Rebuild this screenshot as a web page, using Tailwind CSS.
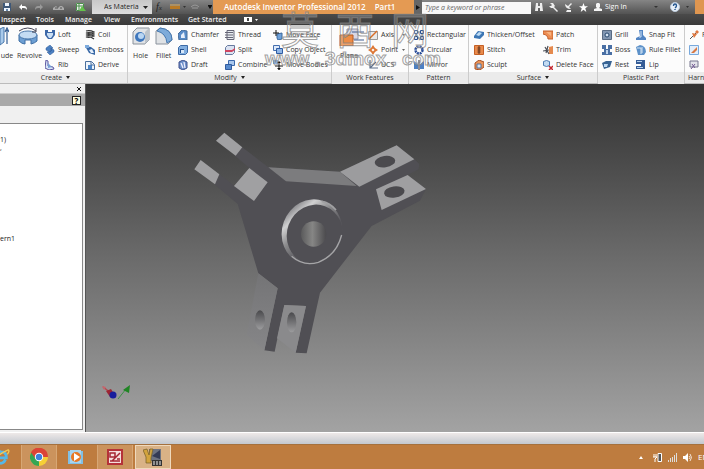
<!DOCTYPE html>
<html lang="en">

<head>
    <meta charset="UTF-8">
    <meta name="viewport" content="width=device-width, initial-scale=1.0">
    <title>Autodesk Inventor Professional 2012 - Part1</title>
    <script src="https://cdn.jsdelivr.net/npm/@tailwindcss/browser@4"></script>
</head>

<body class="relative h-screen flex flex-col overflow-hidden bg-[#333] font-['Open_Sans',sans-serif] text-[7px] leading-[10px] text-[#333] whitespace-nowrap">

    <!-- title bar -->
    <header class="flex h-[14px] shrink-0 items-stretch bg-linear-to-b from-[#858585] to-[#535353] text-white">
        <div class="flex w-[92px] shrink-0 items-center gap-2 pl-[3px]">
            <button aria-label="Save"><svg class="size-2" viewBox="0 0 8 8"><path d="M0 0h8v8H0z" fill="#3f5877"/><path d="M2 0h4v3H2zM1 5h6v3H1z" fill="#eef4fb"/><path d="M3 6h2v2H3z" fill="#6687aa"/></svg></button>
            <button aria-label="Undo"><svg class="size-2" viewBox="0 0 8 8"><path d="M0 4l3-3v2h2q3 0 3 4q-1-2-3-2H3v2z" fill="#fff"/></svg></button>
            <button aria-label="Redo"><svg class="size-2" viewBox="0 0 8 8"><path d="M8 4L5 1v2H3Q0 3 0 7q1-2 3-2h2v2z" fill="#999"/></svg></button>
            <button aria-label="Home" class="ml-[2px]"><svg class="h-2 w-3" viewBox="0 0 12 8"><path d="M0 7h11V5L9 3H7L5 5 3 3 0 5z" fill="#aaa"/><path d="M2 5h3M7 5h2" stroke="#555"/></svg></button>
            <button aria-label="Update" class="ml-[2px]"><svg class="h-[10px] w-3" viewBox="0 0 12 10"><path d="M1 1h8v8H1z" fill="#eee"/><path d="M1.500 1.500h7v7h-7zM1 4h8M4 1v8" fill="none" stroke="#4b8f4b"/><path d="M4 9l3-5 4 5z" fill="#63c24b"/></svg></button>
        </div>
        <div class="relative w-[60px] shrink-0">
            <select aria-label="Appearance" class="h-full w-full appearance-none bg-linear-to-b from-[#c8c8c8] to-[#ddd] pl-3 text-[7px] text-[#222]">
                <option>As Materia</option>
            </select>
            <svg class="pointer-events-none absolute right-1 top-[6px] h-[3px] w-[5px]" viewBox="0 0 5 3"><path d="M0 0h5L2.500 3z" fill="#222"/></svg>
        </div>
        <div class="flex w-[61px] shrink-0 items-center gap-2 pl-1">
            <i class="font-['Liberation_Serif',serif] text-[10px] text-[#222]">f<span class="text-[7px]">x</span></i>
            <svg class="h-2 w-[30px]" viewBox="0 0 30 8"><path d="M0 3h10v3H0z" fill="#b97a25"/><path d="M0 2h10" stroke="#e0b060"/><path d="M13 3h3l-1.500 2z" fill="#333"/><path d="M21 4q4-4 8 0M22 5h6" fill="none" stroke="#999"/></svg>
            <svg class="h-1 w-1" viewBox="0 0 4 4"><path d="M0 0h4v1L2 4 0 1z" fill="#111"/></svg>
        </div>
        <h1 class="flex w-[201px] shrink-0 items-center gap-[9px] bg-[#e49a53] pl-[11px] text-[8px] font-semibold"><span>Autodesk Inventor Professional 2012</span><span>Part1</span></h1>
        <div class="flex w-2 shrink-0 items-center justify-center bg-[#666]"><svg class="h-[5px] w-1" viewBox="0 0 4 5"><path d="M0 0l4 2.500L0 5z" fill="#111"/></svg></div>
        <input type="text" aria-label="Search" placeholder="Type a keyword or phrase" class="mt-[2px] w-[109px] shrink-0 bg-[#f8f8f8] pl-[3px] text-[7px] italic placeholder:text-[#666]">
        <div class="flex flex-1 items-center gap-[6px] pl-1">
            <svg class="size-2" viewBox="0 0 8 8"><path d="M1 0h2v3h2V0h2l1 8H5V5H3v3H0z" fill="#eee"/></svg>
            <svg class="size-[9px]" viewBox="0 0 9 9"><path d="M1 0h3l2 3-1 1 4 4-1 1-4-4H2L0 3l2 0 1-1z" fill="#eee"/></svg>
            <svg class="size-[9px]" viewBox="0 0 9 9"><path d="M1 1q0 5 6 5L5 4l3-3-1-1-3 3zM3 7h4v2H2z" fill="#eee"/></svg>
            <svg class="size-[9px]" viewBox="0 0 9 9"><path d="M4.500 0l1.200 3.200H9L6.300 5.300 7.300 9 4.500 6.800 1.700 9l1-3.700L0 3.200h3.300z" fill="#fff"/></svg>
            <a href="#" class="flex items-center gap-[3px]"><svg class="size-2" viewBox="0 0 8 8"><path d="M3 0h2l1 1v3L5 5l3 1v2H0V6l3-1-1-1V1z" fill="#f4f4f4"/></svg>Sign In</a>
            <svg class="ml-auto h-[2px] w-1" viewBox="0 0 4 2"><path d="M0 0h4L2 2z" fill="#333"/></svg>
            <button aria-label="Help" class="ml-[6px]"><svg class="size-[10px]" viewBox="0 0 10 10"><circle cx="5" cy="5" r="4.500" fill="#e8f0f8" stroke="#bccbdc"/><path d="M3.500 4q0-2 1.500-2t1.500 1.500T5 6M5 7v1" fill="none" stroke="#24568f" stroke-width="1.400"/></svg></button>
            <svg class="h-[2px] w-[3px]" viewBox="0 0 4 2"><path d="M0 0h4L2 2z" fill="#222"/></svg>
            <div class="w-[9px] self-stretch bg-[#df9650]"></div>
        </div>
    </header>

    <!-- ribbon tabs -->
    <nav class="flex h-[11px] shrink-0 items-center bg-linear-to-b from-[#4a4a4a] to-[#3a3a3a] pl-px leading-[11px] font-semibold text-[#eee]">
        <button class="w-[35px] text-left">Inspect</button>
        <button class="w-[29px] text-left">Tools</button>
        <button class="w-[39px] text-left">Manage</button>
        <button class="w-[27px] text-left">View</button>
        <button class="w-[57px] text-left">Environments</button>
        <button class="w-14 text-left">Get Started</button>
        <svg class="h-[5px] w-[15px]" viewBox="0 0 15 5"><path d="M0 0h8v5H0z" fill="#fff"/><path d="M3 1h2v3H3z" fill="#444"/><path d="M11 2h3l-1.500 2z" fill="#fff"/></svg>
    </nav>

    <!-- ribbon -->
    <div class="flex h-[59px] shrink-0 border-b border-[#bbb] bg-[#fcfcfc]">
        <section class="flex w-32 shrink-0 flex-col border-r border-[#ccc]">
            <div class="flex flex-1 pt-[2px]">
                <button class="flex w-[14px] flex-col gap-[5px]">
                    <svg class="h-[19px] w-[9px]" viewBox="0 0 9 19"><path d="M0 2l4-2v15l-4 3z" fill="#a9caeb" stroke="#4a78ab"/><path d="M7 17V3M5 5l2-4 2 4" fill="none" stroke="#345e93" stroke-width="1.200"/></svg>
                    <span>ude</span>
                </button>
                <button class="flex w-[31px] flex-col gap-[5px]">
                    <svg class="ml-1 h-[19px] w-5" viewBox="0 0 20 19"><path d="M1 8v6q3 3 6 3v-4h6v4q4-1 6-3V8z" fill="#6d9fd3" stroke="#3f6fa5"/><ellipse cx="10" cy="8" rx="9" ry="4" fill="#c4dcf3" stroke="#4a78ab"/><path d="M1 4q9-6 17 0M18 1v4h-4" fill="none" stroke="#445"/></svg>
                    <span>Revolve</span>
                </button>
                <div class="w-10">
                    <button class="flex h-[15px] items-center gap-[3px]"><svg class="size-[10px]" viewBox="0 0 10 10"><path d="M0 0h3v2h4V0h3v5L7 9H3L0 5z" fill="#3d68a8"/><path d="M2 3h6v2L6 8H4L2 5z" fill="#c9def4"/></svg>Loft</button>
                    <button class="flex h-[15px] items-center gap-[3px]"><svg class="size-[10px]" viewBox="0 0 10 10"><path d="M5 0L1 3v2l4 2 2-2-2-1 3-1zM5 10l4-3V5L6 3v3L2 7z" fill="#4b80c2" stroke="#315b95" stroke-width=".5"/></svg>Sweep</button>
                    <button class="flex h-[15px] items-center gap-[3px]"><svg class="size-[10px]" viewBox="0 0 10 10"><path d="M1 0l2 1v5l5 1 1 2-5 1-4-2z" fill="#d7e6f7" stroke="#5c55a0"/><path d="M3 3l4 4-4 1z" fill="#789fd5"/></svg>Rib</button>
                </div>
                <div class="flex-1">
                    <button class="flex h-[15px] items-center gap-[3px]"><svg class="size-[10px]" viewBox="0 0 10 10"><path d="M1 1q4-1 8 1-4 2-8 1 4-1 8 1-4 2-8 1 4-1 8 1-4 2-8 1 4-1 8 2" fill="none" stroke="#333" stroke-width="1.200"/></svg>Coil</button>
                    <button class="flex h-[15px] items-center gap-[3px]"><svg class="size-[10px]" viewBox="0 0 10 10"><path d="M0 1l6 1 4 3v5L4 8z" fill="#3868a6"/><path d="M4 5l3-1 2 4-3 0z" fill="#e3eefb"/><path d="M0 0h4v3H0z" fill="#7caadd"/></svg>Emboss</button>
                    <button class="flex h-[15px] items-center gap-[3px]"><svg class="size-[10px]" viewBox="0 0 10 10"><path d="M.5 1.500h6l3 3v5h-9z" fill="#eef4fb" stroke="#4a6f9d"/><path d="M3 5h4v4H3z" fill="#4b85c8"/><path d="M6 2v3h3" fill="none" stroke="#4a6f9d"/></svg>Derive</button>
                </div>
            </div>
            <button class="flex h-3 items-center justify-center gap-1 bg-[#ebebeb] pr-4">Create<svg class="h-[3px] w-1" viewBox="0 0 4 3"><path d="M0 0h4L2 3z" fill="#222"/></svg></button>
        </section>

        <section class="flex w-[204px] shrink-0 flex-col border-r border-[#ccc]">
            <div class="flex flex-1 pt-[2px] pl-1">
                <button class="flex w-[23px] flex-col items-start gap-[5px]">
                    <svg class="h-[19px] w-[18px]" viewBox="0 0 18 19"><path d="M1 5l4-4h12v12l-4 4H1z" fill="#e0e3e6" stroke="#8a929c"/><path d="M13 17V5l4-4v12z" fill="#bcc3ca"/><circle cx="8" cy="10" r="5" fill="#3e77bd"/><circle cx="9" cy="9" r="3" fill="#b9d6f3"/></svg>
                    <span class="pl-px">Hole</span>
                </button>
                <button class="flex w-[23px] flex-col items-start gap-[5px]">
                    <svg class="h-[19px] w-[18px]" viewBox="0 0 18 19"><path d="M1 4l4-3q12 1 12 12l-4 4H1z" fill="#dfe2e5" stroke="#8a929c"/><path d="M5 1q12 1 12 12l-5 3Q11 6 2 4z" fill="#7eabd9" stroke="#4578b0"/></svg>
                    <span class="pl-px">Fillet</span>
                </button>
                <div class="w-[47px]">
                    <button class="flex h-[15px] items-center gap-[3px]"><svg class="size-[10px]" viewBox="0 0 10 10"><path d="M0 4l4-4 5 1v9H1z" fill="#578bc8" stroke="#496e9a"/><path d="M3 5l3-3 1 6H3z" fill="#e5eefa"/></svg>Chamfer</button>
                    <button class="flex h-[15px] items-center gap-[3px]"><svg class="size-[10px]" viewBox="0 0 10 10"><path d="M.5 2.500l2-2h7v7l-2 2h-7z" fill="#81aee0" stroke="#3c6aa6"/><path d="M2 4h4v4H2z" fill="#204d8c"/><path d="M3 5h3v3H3z" fill="#d8e8f9"/></svg>Shell</button>
                    <button class="flex h-[15px] items-center gap-[3px]"><svg class="size-[10px]" viewBox="0 0 10 10"><path d="M1 2l4-2 4 2v6l-4 2-4-2z" fill="#6b8ec8" stroke="#40508c"/><path d="M3 3l2 5M6 2l1 6" stroke="#eef" stroke-width="1.300"/></svg>Draft</button>
                </div>
                <div class="w-12">
                    <button class="flex h-[15px] items-center gap-[3px]"><svg class="size-[10px]" viewBox="0 0 10 10"><path d="M2 .5h7v9H2zM0 2.500h8M0 5h8M0 7.500h8" fill="#e7ebef" stroke="#667"/></svg>Thread</button>
                    <button class="flex h-[15px] items-center gap-[3px]"><svg class="size-[10px]" viewBox="0 0 10 10"><path d="M.5 2.500l2-2h7v7l-2 2h-7z" fill="#dbe2f1" stroke="#66799e"/><path d="M0 5h7l3-2v2L7 7H0z" fill="#ce4661"/></svg>Split</button>
                    <button class="flex h-[15px] items-center gap-[3px]"><svg class="size-[10px]" viewBox="0 0 10 10"><path d="M3.500.5h6v5h-6z" fill="#a9c7ec" stroke="#3b68ab"/><path d="M.5 4.500h6v5h-6z" fill="#588bcd" stroke="#315b9e"/></svg>Combine</button>
                </div>
                <div class="flex-1">
                    <button class="flex h-[15px] items-center gap-[3px]"><svg class="size-[10px]" viewBox="0 0 10 10"><path d="M4 4l5-1v6l-4 1-1-2z" fill="#6fa1d9" stroke="#3b689e"/><path d="M0 3h6M3 0v6" stroke="#111"/></svg>Move Face</button>
                    <button class="flex h-[15px] items-center gap-[3px]"><svg class="size-[10px]" viewBox="0 0 10 10"><path d="M.5.5h6v5h-6z" fill="#dfeafa" stroke="#466fae"/><path d="M3.500 3.500h6v5h-6z" fill="#8fb6e7" stroke="#2f5ca3"/></svg>Copy Object</button>
                    <button class="flex h-[15px] items-center gap-[3px]"><svg class="size-[10px]" viewBox="0 0 10 10"><path d="M0 0h5v4H0z" fill="#79a6dc"/><path d="M2 6h8M6 2v8" stroke="#111"/><path d="M6 1l2 2H4zM6 10L4 8h4z" fill="#111"/></svg>Move Bodies</button>
                </div>
            </div>
            <button class="flex h-3 items-center justify-center gap-1 bg-[#ebebeb]">Modify<svg class="h-[3px] w-1" viewBox="0 0 4 3"><path d="M0 0h4L2 3z" fill="#222"/></svg></button>
        </section>

        <section class="flex w-[77px] shrink-0 flex-col border-r border-[#ccc]">
            <div class="flex flex-1 pt-[2px] pl-[7px]">
                <button class="flex w-[29px] flex-col items-start gap-[5px]">
                    <svg class="h-[19px] w-[26px]" viewBox="0 0 26 19"><path d="M8 2h11v10H8z" fill="#d8d7e5" stroke="#9294a5"/><path d="M13 5h12M15 13h10" stroke="#3f5c92"/><path d="M1 8h13v11H1z" fill="#ed8c46" stroke="#b65b22"/></svg>
                    <span class="pl-px">Plane</span>
                </button>
                <div class="flex-1">
                    <button class="flex h-[15px] items-center gap-[3px]"><svg class="size-[10px]" viewBox="0 0 10 10"><path d="M.5 1.500h9v8h-9z" fill="#e9e9e9" stroke="#999"/><path d="M1 9l8-8" stroke="#d86c27" stroke-width="1.500"/></svg>Axis<svg class="ml-[5px] h-[2px] w-[3px]" viewBox="0 0 4 2"><path d="M0 0h4L2 2z" fill="#333"/></svg></button>
                    <button class="flex h-[15px] items-center gap-[3px]"><svg class="size-[10px]" viewBox="0 0 10 10"><path d="M5 0l2 3 3 2-3 2-2 3-2-3-3-2 3-2z" fill="#dd7735"/><path d="M5 3.500L6.500 5 5 6.500 3.500 5z" fill="#fff"/></svg>Point<svg class="ml-px h-[2px] w-[3px]" viewBox="0 0 4 2"><path d="M0 0h4L2 2z" fill="#333"/></svg></button>
                    <button class="flex h-[15px] items-center gap-[3px]"><svg class="size-[10px]" viewBox="0 0 10 10"><path d="M2 0v8h8M2 8l6-6" fill="none" stroke="#5e6f89" stroke-width="1.200"/></svg>UCS</button>
                </div>
            </div>
            <div class="h-3 bg-[#ebebeb] text-center leading-3">Work Features</div>
        </section>

        <section class="flex w-[60px] shrink-0 flex-col border-r border-[#ccc]">
            <div class="flex-1 pt-[2px] pl-[5px]">
                <button class="flex h-[15px] items-center gap-[3px]"><svg class="size-[10px]" viewBox="0 0 10 10"><path d="M2 2h6v6H2z" fill="none" stroke="#777"/><path d="M.5.5h3v3h-3zM6.500.5h3v3h-3zM.5 6.500h3v3h-3zM6.500 6.500h3v3h-3z" fill="#d7e5f6" stroke="#294f91"/></svg>Rectangular</button>
                <button class="flex h-[15px] items-center gap-[3px]"><svg class="size-[10px]" viewBox="0 0 10 10"><circle cx="5" cy="5" r="3.500" fill="none" stroke="#2a4d99" stroke-width="2.500" stroke-dasharray="2 .75"/></svg>Circular</button>
                <button class="flex h-[15px] items-center gap-[3px]"><svg class="size-[10px]" viewBox="0 0 10 10"><path d="M0 1l4 3v5H0zM10 1L6 4v5h4z" fill="#4d80c3"/><path d="M5 0v10" stroke="#223"/></svg>Mirror</button>
            </div>
            <div class="h-3 bg-[#ebebeb] text-center leading-3">Pattern</div>
        </section>

        <section class="flex w-[129px] shrink-0 flex-col border-r border-[#ccc]">
            <div class="flex flex-1 pt-[2px] pl-[5px]">
                <div class="w-[69px]">
                    <button class="flex h-[15px] items-center gap-[3px]"><svg class="size-[10px]" viewBox="0 0 10 10"><path d="M0 6l4-5 6 1v3L6 9 0 8z" fill="#3c76b4"/><path d="M2 5l3-3 3 1-3 3z" fill="#bddcf5"/></svg>Thicken/Offset</button>
                    <button class="flex h-[15px] items-center gap-[3px]"><svg class="size-[10px]" viewBox="0 0 10 10"><path d="M.5.5h9v9h-9z" fill="#e98a4b" stroke="#c46026"/><path d="M5 1v8M3.500 3h3M3.500 5h3M3.500 7h3" stroke="#61331c"/></svg>Stitch</button>
                    <button class="flex h-[15px] items-center gap-[3px]"><svg class="size-[10px]" viewBox="0 0 10 10"><path d="M1 3l4-3 5 2v5l-4 3-5-1z" fill="#eb9457" stroke="#a75026"/><path d="M3 4h4v4H3z" fill="#dce6f4" stroke="#55719a"/></svg>Sculpt</button>
                </div>
                <div class="flex-1">
                    <button class="flex h-[15px] items-center gap-[3px]"><svg class="size-[10px]" viewBox="0 0 10 10"><path d="M0 1h10v8H5Q5 5 0 4z" fill="#ed8d53" stroke="#c3602c"/><path d="M3 2h5v4z" fill="#f8b27e"/></svg>Patch</button>
                    <button class="flex h-[15px] items-center gap-[3px]"><svg class="size-[10px]" viewBox="0 0 10 10"><path d="M6 2l4-1v8H6z" fill="#e58a4e"/><path d="M0 6l6-1M2 2l4 7M5 1L3 8" stroke="#4d5058" stroke-width="1.200"/></svg>Trim</button>
                    <button class="flex h-[15px] items-center gap-[3px]"><svg class="size-[10px]" viewBox="0 0 10 10"><path d="M.5 1.500l3-1 3 1v4l-3 1-3-1z" fill="#c4dbf2" stroke="#4b7bb3"/><path d="M6 6l4 4M10 6l-4 4" stroke="#c5282e" stroke-width="1.500"/></svg>Delete Face</button>
                </div>
            </div>
            <button class="flex h-3 items-center justify-center gap-1 bg-[#ebebeb]">Surface<svg class="h-[3px] w-1" viewBox="0 0 4 3"><path d="M0 0h4L2 3z" fill="#222"/></svg></button>
        </section>

        <section class="flex w-[87px] shrink-0 flex-col border-r border-[#ccc]">
            <div class="flex flex-1 pt-[2px] pl-1">
                <div class="w-[34px]">
                    <button class="flex h-[15px] items-center gap-[3px]"><svg class="size-[10px]" viewBox="0 0 10 10"><path d="M.5.5h9v9h-9z" fill="#8397b2" stroke="#596b83"/><circle cx="5" cy="5" r="2" fill="#d6e4f4" stroke="#27476e"/></svg>Grill</button>
                    <button class="flex h-[15px] items-center gap-[3px]"><svg class="size-[10px]" viewBox="0 0 10 10"><path d="M0 0h4v4h2V0h4v4H8v3h2v3H0V7h2V4H0z" fill="#496fa4"/><path d="M4 5h2v4H4z" fill="#c1d7ef"/></svg>Boss</button>
                    <button class="flex h-[15px] items-center gap-[3px]"><svg class="size-[10px]" viewBox="0 0 10 10"><path d="M0 3l4-2h6L8 7 2 9z" fill="#376394"/><path d="M2 4h4L5 7H2z" fill="#bfd9f2"/></svg>Rest</button>
                </div>
                <div class="flex-1">
                    <button class="flex h-[15px] items-center gap-[3px]"><svg class="size-[10px]" viewBox="0 0 10 10"><path d="M3 0h4v5l3 3v2H0V8l4-2z" fill="#5385c3"/><path d="M5 1v6H3" fill="none" stroke="#d2e3f6"/></svg>Snap Fit</button>
                    <button class="flex h-[15px] items-center gap-[3px]"><svg class="size-[10px]" viewBox="0 0 10 10"><path d="M0 2l4-2q6 1 6 7l-2 3H2z" fill="#5c91c9"/><path d="M1 3h4v6M6 2v6" fill="none" stroke="#d6e6f5"/></svg>Rule Fillet</button>
                    <button class="flex h-[15px] items-center gap-[3px]"><svg class="size-[10px]" viewBox="0 0 10 10"><path d="M0 0h9v9H0V6h5V4H0z" fill="#355c96"/><path d="M1 1h5v1H1zM1 7h6v1H1z" fill="#b5d0ec"/></svg>Lip</button>
                </div>
            </div>
            <div class="h-3 bg-[#ebebeb] text-center leading-3">Plastic Part</div>
        </section>

        <section class="flex flex-1 flex-col overflow-hidden">
            <div class="flex-1 pt-[2px] pl-1">
                <button class="flex h-[15px] items-center gap-[3px]"><svg class="size-[10px] shrink-0" viewBox="0 0 10 10"><path d="M1 9l7-7" stroke="#555"/><path d="M3 3l5 1-3 4zM8 0l2 2-2 2-2-2z" fill="#df7941"/></svg>P</button>
                <button aria-label="Place pins" class="flex h-[15px] items-center"><svg class="size-[10px]" viewBox="0 0 10 10"><path d="M.5.5h9v9h-9z" fill="#e4effb" stroke="#78a9dc"/><path d="M2 8l6-6v3L5 8z" fill="#d87842"/></svg></button>
                <button aria-label="Properties" class="flex h-[15px] items-center"><svg class="size-[10px]" viewBox="0 0 10 10"><path d="M1 1h8v6H1z" fill="#e3e3ea" stroke="#77768f"/><path d="M2 9l4-5M3 4l3 4" stroke="#735a94"/></svg></button>
            </div>
            <div class="h-3 bg-[#ebebeb] pl-[3px] leading-3">Harness</div>
        </section>
    </div>

    <!-- workspace -->
    <main class="flex min-h-0 flex-1">
        <aside class="flex w-[86px] shrink-0 flex-col border-r border-[#555] bg-[#f0f0f0]">
            <div class="flex h-[10px] items-center justify-end border-b border-[#ccc] pr-1">
                <button aria-label="Close panel"><svg class="size-1" viewBox="0 0 4 4"><path d="M0 0l4 4M4 0L0 4" stroke="#111"/></svg></button>
            </div>
            <div class="flex h-3 items-center justify-end bg-[#a9a9a9] pr-1">
                <button aria-label="Browser help" class="size-[9px] border border-[#222] bg-[#ffffe1] text-[8px] leading-[7px] font-bold text-black">?</button>
            </div>
            <ul class="mt-[17px] mr-[2px] mb-[2px] flex-1 border-y border-r border-[#888] bg-white pt-[11px] text-[#222]">
                <li class="h-[10px]">1)</li>
                <li class="h-[89px] leading-[6px]">,</li>
                <li>ern1</li>
            </ul>
        </aside>

        <div class="min-w-0 flex-1 bg-linear-to-b from-[#323232] via-[#6b6b6b] to-[#a3a3a3]">
            <svg class="h-full w-full" viewBox="86 84 618 348" role="img" aria-label="Part1 model">
                <defs>
                    <linearGradient id="rim" x1="0" y1="0.200" x2="1" y2="0.800">
                        <stop offset="0" stop-color="#6c6c70" />
                        <stop offset=".2" stop-color="#d0d0d1" />
                        <stop offset=".4" stop-color="#8a8a8c" />
                        <stop offset=".65" stop-color="#58575c" />
                        <stop offset="1" stop-color="#504f54" />
                    </linearGradient>
                    <linearGradient id="bore">
                        <stop offset="0" stop-color="#5a5a5b" />
                        <stop offset=".45" stop-color="#868685" />
                        <stop offset="1" stop-color="#4b4a4d" />
                    </linearGradient>
                    <linearGradient id="leg" x1="0" y1="0" x2="0" y2="1">
                        <stop offset="0" stop-color="#747476" />
                        <stop offset="1" stop-color="#868688" />
                    </linearGradient>
                    <linearGradient id="pin" x1="0" y1="0" x2="0" y2="1">
                        <stop offset="0" stop-color="#49494c" />
                        <stop offset="1" stop-color="#9c9c9e" />
                    </linearGradient>
                </defs>
                <g transform="translate(180 120) scale(.3333)">
                    <path d="M187 82L265 142 480 155 650 76 703 118 718 132 716 148 683 165 738 207 720 242 575 318 420 518 380 700 347 698 378 558 313 555 284 695 253 691 293 505 235 460 173 252 103 193 118 163 163 197 208 144 165 107z" fill="#504f54" />
                    <path d="M133 38L187 82 167 107 108 62zM62 120L118 163 105 193 43 148zM208 144L263 187 222 243 162 198z" fill="#a0a0a2" />
                    <path d="M265 142L480 155 530 198 318 184z" fill="#7c7c7e" />
                    <path d="M480 155L650 76 703 118 538 200z" fill="#9c9c9e" />
                    <path d="M588 208L683 165 738 207 605 270z" fill="#9f9fa1" />
                    <ellipse cx="615" cy="125" rx="31" ry="17" fill="#4b4a4e" transform="rotate(-8 615 125)" />
                    <ellipse cx="643" cy="216" rx="31" ry="17" fill="#4b4a4e" transform="rotate(-8 643 216)" />
                    <path d="M235 460L293 505 253 691 200 645z" fill="url(#leg)" />
                    <path d="M313 555L378 558 347 698 291 655z" fill="#8a8a8c" />
                    <ellipse cx="240" cy="600" rx="15" ry="29" fill="url(#pin)" />
                    <ellipse cx="335" cy="607" rx="14" ry="30" fill="url(#pin)" />
                    <ellipse cx="396" cy="336" rx="90" ry="99" fill="url(#rim)" transform="rotate(20 396 336)" />
                    <ellipse cx="404" cy="343" rx="83" ry="90" fill="#504f54" transform="rotate(20 404 343)" />
                    <path d="M335 409Q370 440 415 427 470 405 485 345" fill="none" stroke="#a5a5a7" stroke-width="4" />
                    <path d="M425 244Q450 248 468 270" fill="none" stroke="#a0a0a2" stroke-width="5" />
                    <circle cx="401" cy="342" r="38" fill="url(#bore)" />
                </g>
                <!-- axis triad -->
                <path d="M103 387l8 6" stroke="#b04a50" stroke-width="1.500" />
                <path d="M118 399l8-10" stroke="#3f8f48" />
                <path d="M102 386l4 1-2 3z" fill="#c8646b" />
                <path d="M106 391l5-2 3 5-4 3z" fill="#9d2532" />
                <circle cx="113" cy="395" r="3.500" fill="#171e9c" />
                <path d="M130 385l-1 8-6-3z" fill="#208524" />
            </svg>
        </div>
    </main>

    <div class="h-3 shrink-0 border-t border-white bg-linear-to-b from-[#eee9e8] to-[#c3c8cf]"></div>

    <!-- taskbar -->
    <footer class="flex h-[25px] shrink-0 items-stretch border-t border-[#a5713e] bg-[#be7c3f] text-white">
        <button aria-label="Internet Explorer" class="flex w-[21px] items-center"><svg class="size-[18px] -ml-2" viewBox="0 0 20 20"><path d="M15 13q-2 4-5 4-6 0-6-7t6-6q6 0 6 7H5" fill="none" stroke="#55b8e8" stroke-width="3"/><path d="M2 17Q4 8 18 2q2 1-1 5" fill="none" stroke="#f0ca55" stroke-width="1.500"/></svg></button>
        <button aria-label="Chrome" class="flex w-9 items-center justify-center border-x border-[#d7a775] bg-[#cb935d]"><svg class="size-[18px]" viewBox="0 0 18 18"><circle cx="9" cy="9" r="9" fill="#f6cf35"/><path d="M9 9H18A9 9 0 0 0 1.200 4.500z" fill="#db4437"/><path d="M9 9L1.200 4.500A9 9 0 0 0 9 18z" fill="#35a653"/><path d="M9 5h8a9 9 0 0 0-16-.500L5 10z" fill="#db4437"/><circle cx="9" cy="9" r="4.200" fill="#fff"/><circle cx="9" cy="9" r="3.200" fill="#3e82dc"/></svg></button>
        <button aria-label="Media Player" class="flex w-[38px] items-center justify-center"><svg class="size-4" viewBox="0 0 16 16"><path d="M0 2h15v13H0z" fill="#82c0e4"/><path d="M2 1h11v13H2z" fill="#a8d5ef"/><circle cx="8" cy="8" r="5" fill="#e87824"/><path d="M6 4v8l6-4z" fill="#fff"/></svg></button>
        <button aria-label="Drawing app" class="ml-[2px] flex w-9 items-center justify-center border-x border-[#d7a775] bg-[#cb935d]"><svg class="size-4" viewBox="0 0 16 16"><path d="M0 0h16v16H0z" fill="#b53239"/><path d="M2 2h12v12H2z" fill="#f5dedd"/><path d="M3 4h5v4H3zM5 12l8-8M3 12h10M10 10h3" fill="none" stroke="#a52632" stroke-width="1.500"/></svg></button>
        <button aria-label="Inventor" class="ml-[2px] flex w-9 items-center justify-center border border-[#efd9bd] bg-[#d9b286]"><svg class="h-[18px] w-5" viewBox="0 0 20 18"><path d="M6 1h12v12H6z" fill="#6d7381"/><path d="M9 8l8-6v9z" fill="#343b55"/><path d="M0 2l4-1 2 6 1-6h3L8 10v5H3V9z" fill="#d2a33d" stroke="#715b28" stroke-width=".7"/><path d="M9 12h10v6H9z" fill="#333"/><path d="M11 17v-4M13 14h2M13 16h2M17 13v4" stroke="#eee"/></svg></button>
        <div class="ml-auto flex items-center gap-[6px] text-[8px]">
            <svg class="h-[3px] w-1" viewBox="0 0 4 3"><path d="M0 3h4L2 0z" fill="#fff"/></svg>
            <svg class="ml-1 size-[9px]" viewBox="0 0 9 9"><path d="M1 1v3M3 1v3M0 4h4L2 6v3" fill="none" stroke="#fff"/><path d="M5 .5h3.500v8H5z" fill="#555" stroke="#fff"/></svg>
            <svg class="size-[9px]" viewBox="0 0 9 9"><path d="M0 7h1v2H0zM2 5h1v4H2zM4 4h1v5H4zM6 2h1v7H6zM8 0h1v9H8z" fill="#ddd"/></svg>
            <svg class="size-[9px]" viewBox="0 0 9 9"><path d="M0 3h2l3-3v9L2 6H0z" fill="#fff"/><path d="M6 3q2 1.500 0 3M7 1q3 3.500 0 7" fill="none" stroke="#fff" stroke-width=".8"/></svg>
            <span class="w-[6px] overflow-hidden">EN</span>
        </div>
    </footer>

    <!-- watermark -->
    <div class="pointer-events-none absolute top-[6px] left-[265px] w-[176px] text-white/20 [-webkit-text-stroke:1px_rgb(130_130_130/0.75)]">
        <div class="flex justify-between pr-3 pl-4 font-['Noto_Sans_CJK_SC',sans-serif] text-[38px] leading-[44px]"><span>莫</span><span>西</span><span>网</span></div>
        <div class="flex justify-between font-['Liberation_Sans',sans-serif] text-[19px] leading-[18px] font-bold"><span>www</span><span>.</span><span>3dmox</span><span>.</span><span>com</span></div>
    </div>
</body>

</html>
